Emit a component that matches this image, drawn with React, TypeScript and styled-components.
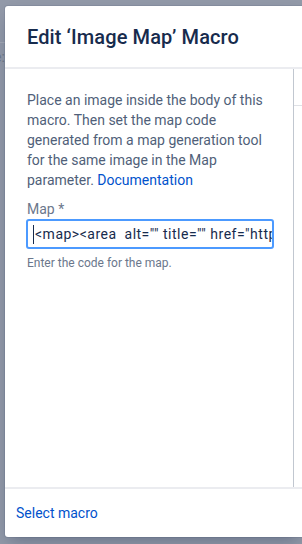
import React from "react";
import styled, { createGlobalStyle } from "styled-components";

const Global = createGlobalStyle`
  html, body { margin: 0; padding: 0; }
  body {
    background: #9299a8;
    font-family: Roboto, "Liberation Sans", sans-serif;
    overflow: hidden;
  }
`;

const Page = styled.div`
  position: relative;
  width: 302px;
  height: 544px;
  box-sizing: border-box;
  padding: 6px 0 7px 5px;
  display: flex;
`;

const Behind = styled.div`
  position: absolute;
  left: 0;
  top: 0;
  width: 5px;
  height: 544px;
  overflow: hidden;
`;

const BehindLine = styled.div`
  position: absolute;
  left: 0;
  top: 42px;
  width: 5px;
  height: 1px;
  background: #a3a8b4;
`;

const BehindText = styled.span`
  position: absolute;
  left: -6px;
  top: 49px;
  font-size: 14px;
  color: #6f7686;
`;

const Modal = styled.div`
  flex: 1;
  display: flex;
  flex-direction: column;
  background: #ffffff;
  border-radius: 3px 0 0 3px;
  box-shadow: 0 0 0 1px rgba(9, 30, 66, 0.08), 0 8px 16px -4px rgba(9, 30, 66, 0.3);
  position: relative;
  z-index: 1;
`;

const Header = styled.div`
  height: 61px;
  flex: none;
  display: flex;
  align-items: center;
  padding-left: 22px;
  border-bottom: 2px solid #ebecf0;
`;

const Title = styled.h1`
  margin: 0;
  font-size: 20px;
  font-weight: 500;
  color: #172b4d;
  white-space: nowrap;
  letter-spacing: 0.1px;
`;

const Body = styled.div`
  flex: 1;
  display: flex;
  min-height: 0;
`;

const FormPanel = styled.div`
  width: 289px;
  flex: none;
  box-sizing: border-box;
  border-right: 1px solid #c1c7d0;
  padding: 21px 20px 0 22px;
  display: flex;
  flex-direction: column;
`;

const PreviewPanel = styled.div`
  flex: 1;
  display: flex;
  flex-direction: column;
`;

const PreviewHeader = styled.div`
  height: 36px;
  flex: none;
  border-bottom: 1px solid #dfe1e6;
`;

const Description = styled.p`
  margin: 0;
  font-size: 14px;
  line-height: 20px;
  color: #505f79;
`;

const Link = styled.a`
  color: #0052cc;
  text-decoration: none;
`;

const Label = styled.label`
  margin-top: 10px;
  font-size: 14px;
  line-height: 19px;
  color: #6b778c;
`;

const Input = styled.div`
  margin-left: -1px;
  width: 248px;
  height: 30px;
  box-sizing: border-box;
  border: 2px solid #4c9aff;
  border-radius: 3px;
  display: flex;
  align-items: center;
  padding-left: 5px;
  overflow: hidden;
  white-space: nowrap;
  font-size: 14px;
  color: #172b4d;
`;

const Caret = styled.span`
  display: inline-block;
  width: 1px;
  height: 19px;
  background: #172b4d;
  margin-right: 1px;
  flex: none;
`;

const InputText = styled.span`
  white-space: pre;
  letter-spacing: 0.5px;
`;

const Help = styled.div`
  margin-top: 7px;
  font-size: 12px;
  line-height: 14px;
  color: #6b778c;
`;

const Footer = styled.div`
  height: 50px;
  flex: none;
  box-sizing: border-box;
  border-top: 2px solid #ebecf0;
  display: flex;
  align-items: center;
  padding-left: 11px;
`;

const FooterLink = styled.a`
  font-size: 14px;
  color: #0052cc;
  text-decoration: none;
`;

export default function App() {
  return (
    <>
      <Global />
      <Page>
        <Behind>
          <BehindLine />
          <BehindText>e:</BehindText>
        </Behind>
        <Modal>
          <Header>
            <Title>Edit ‘Image Map’ Macro</Title>
          </Header>
          <Body>
            <FormPanel>
              <Description>
                Place an image inside the body of this macro. Then set the map code
                generated from a map generation tool for the same image in the Map
                parameter. <Link href="#">Documentation</Link>
              </Description>
              <Label>Map *</Label>
              <Input>
                <Caret />
                <InputText>{'<map><area  alt="" title="" href="http://example.com" coords="" shape="rect"></map>'}</InputText>
              </Input>
              <Help>Enter the code for the map.</Help>
            </FormPanel>
            <PreviewPanel>
              <PreviewHeader />
            </PreviewPanel>
          </Body>
          <Footer>
            <FooterLink href="#">Select macro</FooterLink>
          </Footer>
        </Modal>
      </Page>
    </>
  );
}
